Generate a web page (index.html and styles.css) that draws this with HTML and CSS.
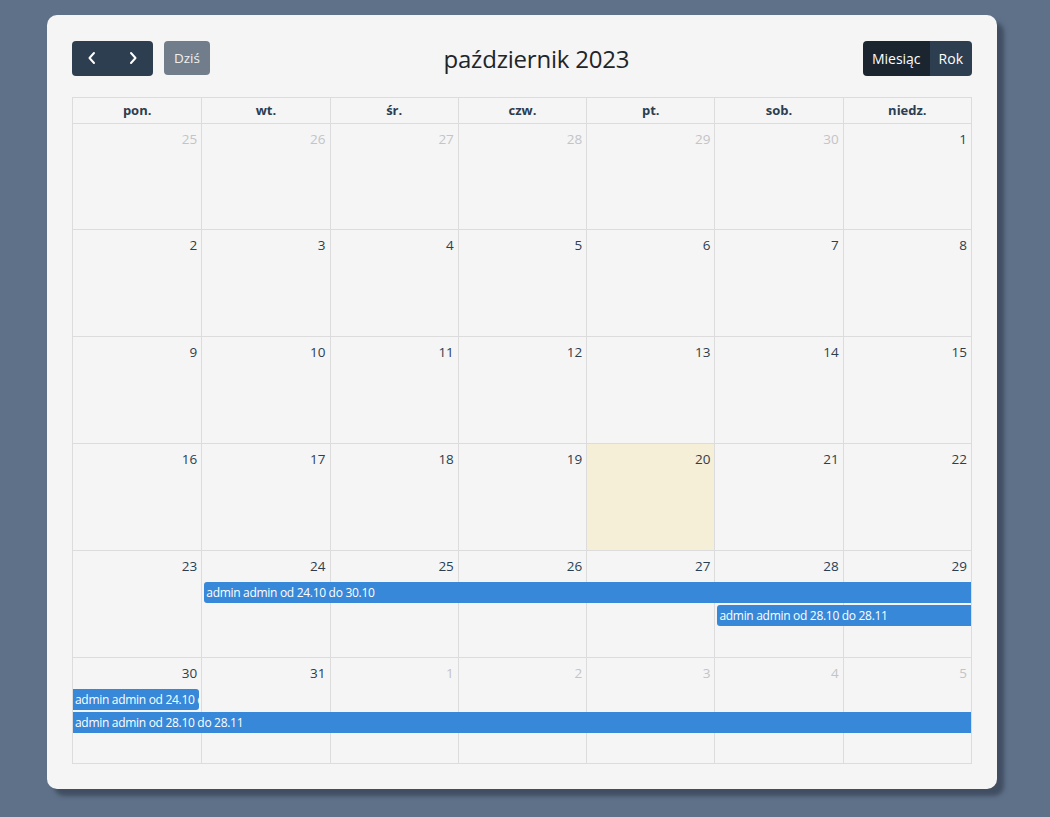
FILE: index.html
```html
<!DOCTYPE html>
<html lang="pl">
<head>
<meta charset="utf-8">
<title>Kalendarz</title>
<link rel="stylesheet" href="styles.css">
</head>
<body>
<div class="card">
  <div class="toolbar">
    <div class="tb-left">
      <div class="btn-group">
        <button class="btn btn-dark btn-icon" aria-label="prev">
          <svg width="12" height="14" viewBox="0 0 12 14"><path d="M8 2 L3.5 7 L8 12" fill="none" stroke="#fff" stroke-width="2" stroke-linecap="round" stroke-linejoin="round"/></svg>
        </button>
        <button class="btn btn-dark btn-icon" aria-label="next">
          <svg width="12" height="14" viewBox="0 0 12 14"><path d="M4 2 L8.5 7 L4 12" fill="none" stroke="#fff" stroke-width="2" stroke-linecap="round" stroke-linejoin="round"/></svg>
        </button>
      </div>
      <button class="btn btn-today">Dziś</button>
    </div>
    <h2 class="title">październik 2023</h2>
    <div class="btn-group">
      <button class="btn btn-dark active">Miesiąc</button>
      <button class="btn btn-dark">Rok</button>
    </div>
  </div>

  <div class="cal">
    <div class="head">
      <div class="hcell">pon.</div><div class="hcell">wt.</div><div class="hcell">śr.</div><div class="hcell">czw.</div><div class="hcell">pt.</div><div class="hcell">sob.</div><div class="hcell">niedz.</div>
    </div>

    <div class="week first">
      <div class="day other c1"><span class="num">25</span></div>
      <div class="day other c2"><span class="num">26</span></div>
      <div class="day other c3"><span class="num">27</span></div>
      <div class="day other c4"><span class="num">28</span></div>
      <div class="day other c5"><span class="num">29</span></div>
      <div class="day other c6"><span class="num">30</span></div>
      <div class="day c7"><span class="num">1</span></div>
    </div>
    <div class="week">
      <div class="day c1"><span class="num">2</span></div>
      <div class="day c2"><span class="num">3</span></div>
      <div class="day c3"><span class="num">4</span></div>
      <div class="day c4"><span class="num">5</span></div>
      <div class="day c5"><span class="num">6</span></div>
      <div class="day c6"><span class="num">7</span></div>
      <div class="day c7"><span class="num">8</span></div>
    </div>
    <div class="week">
      <div class="day c1"><span class="num">9</span></div>
      <div class="day c2"><span class="num">10</span></div>
      <div class="day c3"><span class="num">11</span></div>
      <div class="day c4"><span class="num">12</span></div>
      <div class="day c5"><span class="num">13</span></div>
      <div class="day c6"><span class="num">14</span></div>
      <div class="day c7"><span class="num">15</span></div>
    </div>
    <div class="week">
      <div class="day c1"><span class="num">16</span></div>
      <div class="day c2"><span class="num">17</span></div>
      <div class="day c3"><span class="num">18</span></div>
      <div class="day c4"><span class="num">19</span></div>
      <div class="day today c5"><span class="num">20</span></div>
      <div class="day c6"><span class="num">21</span></div>
      <div class="day c7"><span class="num">22</span></div>
    </div>
    <div class="week">
      <div class="day c1"><span class="num">23</span></div>
      <div class="day c2"><span class="num">24</span></div>
      <div class="day c3"><span class="num">25</span></div>
      <div class="day c4"><span class="num">26</span></div>
      <div class="day c5"><span class="num">27</span></div>
      <div class="day c6"><span class="num">28</span></div>
      <div class="day c7"><span class="num">29</span></div>
      <div class="event ev-start ev-r1" style="grid-column: 2 / 8;">admin admin od 24.10 do 30.10</div>
      <div class="event ev-start ev-r2" style="grid-column: 6 / 8;">admin admin od 28.10 do 28.11</div>
    </div>
    <div class="week last">
      <div class="day c1"><span class="num">30</span></div>
      <div class="day c2"><span class="num">31</span></div>
      <div class="day other c3"><span class="num">1</span></div>
      <div class="day other c4"><span class="num">2</span></div>
      <div class="day other c5"><span class="num">3</span></div>
      <div class="day other c6"><span class="num">4</span></div>
      <div class="day other c7"><span class="num">5</span></div>
      <div class="event ev-end ev-r1" style="grid-column: 1 / 2;">admin admin od 24.10 do 30.10</div>
      <div class="event ev-r2" style="grid-column: 1 / 8;">admin admin od 28.10 do 28.11</div>
    </div>
  </div>
</div>
</body>
</html>
```

FILE: styles.css
```css
* { box-sizing: border-box; }

html, body {
  margin: 0;
  padding: 0;
}

body {
  background: #5f7189;
  font-family: "Open Sans", "Noto Sans", "DejaVu Sans", sans-serif;
  color: #212529;
  padding: 15px 53px 28px 47px;
}

.card {
  width: 950px;
  height: 774px;
  background: #f5f5f5;
  border-radius: 10px;
  box-shadow: 7px 7px 4px rgba(40, 50, 65, 0.55);
  padding: 25px;
}

.toolbar {
  display: flex;
  align-items: center;
  justify-content: space-between;
  height: 36px;
  margin-bottom: 21px;
}

.tb-left {
  display: flex;
  align-items: center;
  gap: 11px;
}

.btn-group {
  display: flex;
}

.btn {
  border: 0;
  font-family: inherit;
  font-size: 14px;
  color: #fff;
  height: 35px;
  padding: 0 9px;
  cursor: pointer;
  display: flex;
  align-items: center;
  justify-content: center;
}

.btn-dark {
  background: #2c3e50;
}

.btn-dark.active {
  background: #1a252f;
}

.btn-group .btn:first-child {
  border-radius: 4px 0 0 4px;
}

.btn-group .btn:last-child {
  border-radius: 0 4px 4px 0;
}

.btn-icon {
  width: 40.5px;
  padding: 0;
}

.btn-today {
  background: #717d8a;
  border-radius: 4px;
  height: 34px;
  padding: 0 10px;
  font-size: 13.5px;
  color: #f0f0f0;
}

.title {
  margin: 0;
  font-weight: 400;
  font-size: 24px;
  color: #212529;
  letter-spacing: -0.2px;
}

.cal {
  border: 1px solid #dcdcdc;
  width: 900px;
}

.head {
  display: grid;
  grid-template-columns: repeat(7, 1fr);
  height: 26px;
  border-bottom: 1px solid #dcdcdc;
}

.hcell {
  font-size: 13px;
  font-weight: 700;
  color: #2c3e50;
  text-align: center;
  line-height: 25px;
  border-left: 1px solid #dcdcdc;
}

.hcell:first-child {
  border-left: 0;
}

.week {
  display: grid;
  grid-template-columns: repeat(7, 1fr);
  grid-template-rows: 31px 21px 23px 1fr;
  height: 107px;
  border-bottom: 1px solid #dcdcdc;
}

.week.first {
  height: 106px;
}

.week.last {
  border-bottom: 0;
  height: 105px;
}

.day {
  grid-row: 1 / -1;
  border-left: 1px solid #dcdcdc;
  display: flex;
  justify-content: flex-end;
  align-items: flex-start;
  padding: 6px 4px 0 0;
}

.day.c1 { grid-column: 1; border-left: 0; }
.day.c2 { grid-column: 2; }
.day.c3 { grid-column: 3; }
.day.c4 { grid-column: 4; }
.day.c5 { grid-column: 5; }
.day.c6 { grid-column: 6; }
.day.c7 { grid-column: 7; }

.num {
  font-size: 13.5px;
  line-height: 19px;
  color: #2c3e50;
}

.day.other .num {
  color: #c2c4c7;
}

.day.today {
  background: #f5efd8;
}

.event {
  background: #3788d8;
  color: #fff;
  font-size: 12px;
  letter-spacing: -0.3px;
  line-height: 21px;
  height: 21px;
  padding-left: 2px;
  white-space: nowrap;
  overflow: hidden;
  z-index: 1;
}

.ev-r1 { grid-row: 2; }
.ev-r2 { grid-row: 3; margin-top: 2px; }

.ev-start {
  margin-left: 3px;
  border-radius: 3px 0 0 3px;
}

.ev-end {
  margin-right: 2px;
  border-radius: 0 3px 3px 0;
}
```
